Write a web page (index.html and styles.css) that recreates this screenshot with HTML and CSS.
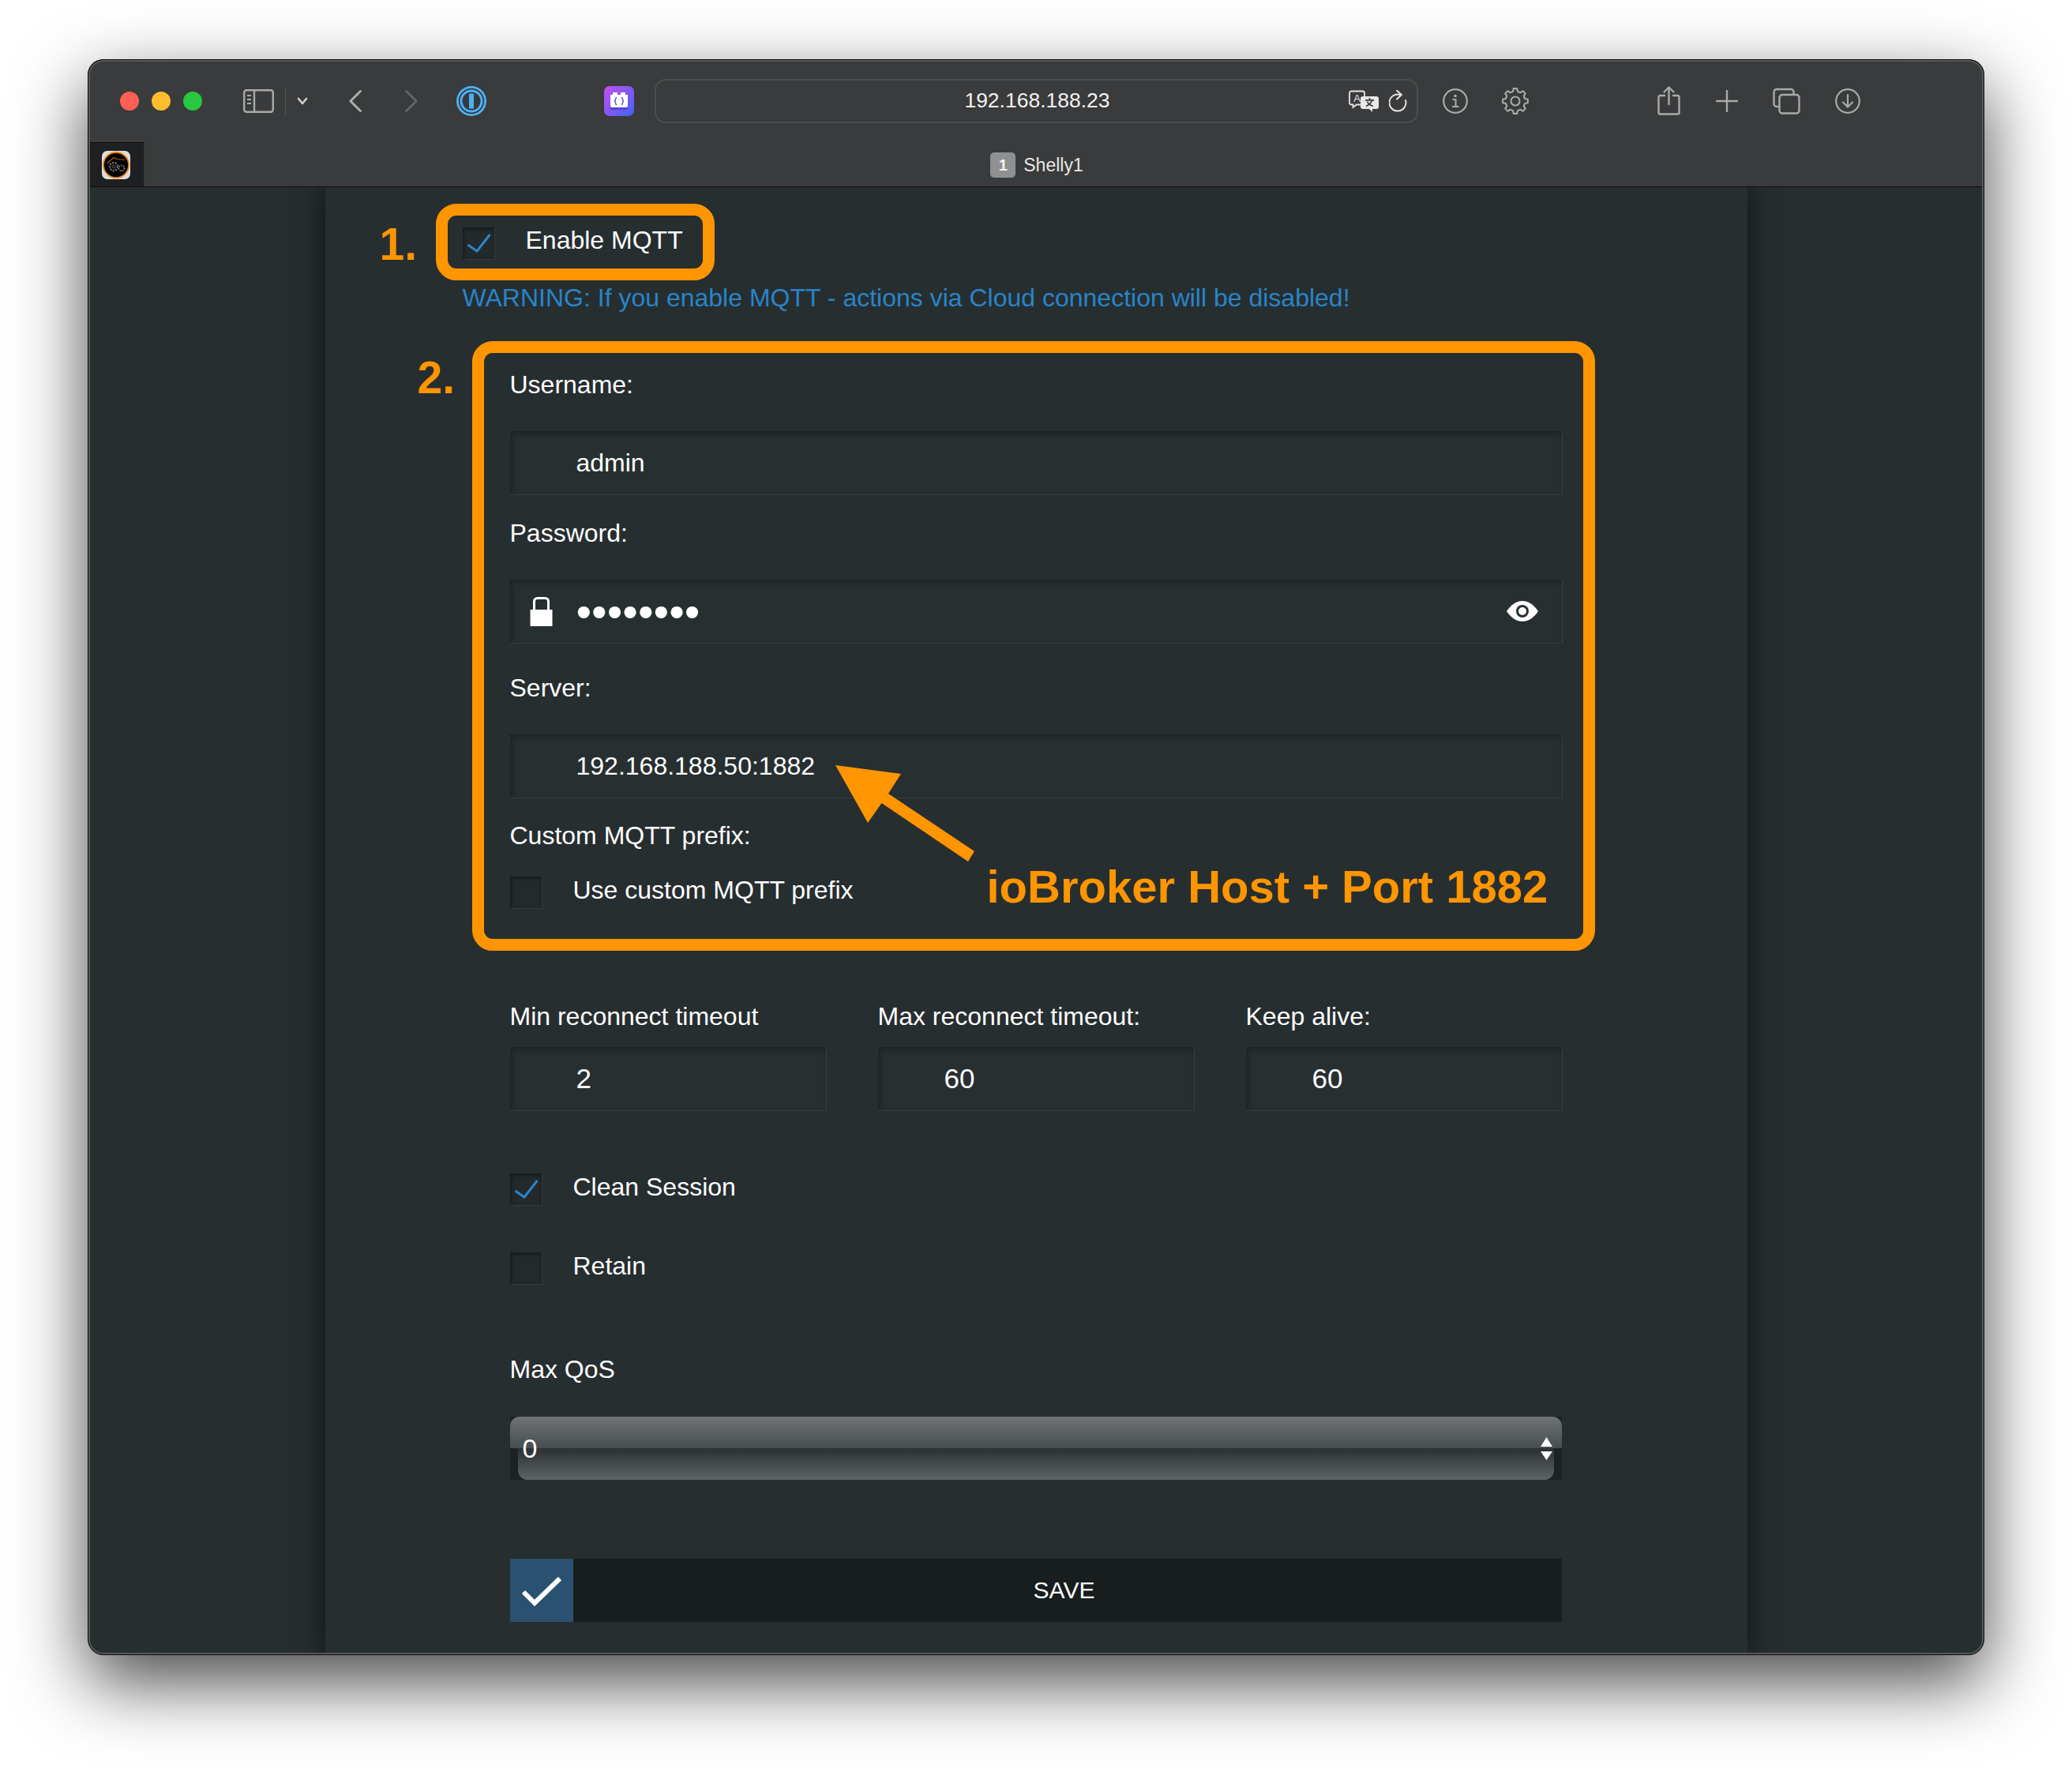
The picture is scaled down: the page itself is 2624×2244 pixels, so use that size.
FILE: index.html
```html
<!DOCTYPE html>
<html lang="en">
<head>
    <meta charset="UTF-8">
    <meta name="viewport" content="width=device-width, initial-scale=1.0">
    <title>Shelly1 MQTT</title>
    <link rel="stylesheet" href="styles.css">
</head>
<body>
<div class="window">
    <div class="toolbar">
        <span class="light light-red"></span>
        <span class="light light-yellow"></span>
        <span class="light light-green"></span>

        <svg class="ic ic-sidebar" width="39" height="30" viewBox="0 0 39 30" fill="none" stroke="#a9aaaa" stroke-width="2.4">
            <rect x="1.2" y="1.2" width="36.6" height="27.6" rx="3"/>
            <path d="M14 1v28"/>
            <path d="M5 8h5M5 13h5M5 18h5" stroke-width="2"/>
        </svg>
        <span class="ic ic-sep"></span>
        <svg class="ic ic-drop" width="14" height="10" viewBox="0 0 14 10" fill="none" stroke="#d0d0d0" stroke-width="2.6" stroke-linecap="round" stroke-linejoin="round">
            <path d="M2 2l5 6 5-6"/>
        </svg>
        <svg class="ic ic-back" width="16" height="28" viewBox="0 0 16 28" fill="none" stroke="#b0b1b1" stroke-width="2.8" stroke-linecap="round" stroke-linejoin="round">
            <path d="M14.5 1.5L1.8 14l12.7 12.5"/>
        </svg>
        <svg class="ic ic-forward" width="16" height="28" viewBox="0 0 16 28" fill="none" stroke="#636465" stroke-width="2.8" stroke-linecap="round" stroke-linejoin="round">
            <path d="M1.5 1.5L14.2 14 1.5 26.5"/>
        </svg>
        <svg class="ic ic-onepass" width="38" height="38" viewBox="-19 -19 38 38">
            <circle r="19" fill="#4cb0f6"/>
            <circle r="15.3" fill="none" stroke="#36393c" stroke-width="1.7"/>
            <circle r="11.5" fill="#36393c"/>
            <rect x="-3" y="-9.5" width="6" height="19" rx="1" fill="#4cb0f6"/>
        </svg>
        <svg class="ic ic-ext" width="38" height="38" viewBox="0 0 38 38">
            <defs>
                <linearGradient id="extGrad" x1="0" y1="0" x2="1" y2="1">
                    <stop offset="0" stop-color="#c64ff0"/>
                    <stop offset="1" stop-color="#3f63f4"/>
                </linearGradient>
            </defs>
            <rect width="38" height="38" rx="7" fill="url(#extGrad)"/>
            <rect x="8" y="12" width="22" height="18" rx="2" fill="#3a2fc0" opacity="0.55"/>
            <path d="M8 11h3V8h6v3h4V8h6v3h3v14a2 2 0 0 1-2 2H10a2 2 0 0 1-2-2z" fill="#fff"/>
            <path d="M16 14.500c-2 0-1 3.500-2.500 4.500 1.500 1 .5 4.500 2.500 4.500M22 14.500c2 0 1 3.500 2.500 4.500-1.500 1-.5 4.500-2.500 4.500" fill="none" stroke="#4a45d8" stroke-width="1.4"/>
        </svg>

        <div class="ic address">
            <span></span>
            <span class="address-text">192.168.188.23</span>
            <span class="address-tools">
                <svg width="38" height="28" viewBox="0 0 38 28">
                    <path d="M3.500 1.500h14a2.500 2.500 0 0 1 2.500 2.500v12a2.500 2.500 0 0 1-2.500 2.500H10l-4.500 3.500v-3.500h-2A2.500 2.500 0 0 1 1 16V4a2.500 2.500 0 0 1 2.500-2.500z" fill="#3a3b3c" stroke="#e6e6e6" stroke-width="1.8"/>
                    <text x="10.500" y="14.500" text-anchor="middle" class="translate-a">A</text>
                    <path d="M18 8h17a3 3 0 0 1 3 3v10a3 3 0 0 1-3 3h-5v4l-4-4h-8a3 3 0 0 1-3-3V11a3 3 0 0 1 3-3z" fill="#e8e8e8"/>
                    <path d="M26.500 10v2.500M21 12.800h11M29.500 13c-1 3.500-4 6-7.500 7.500M23.500 14.500c1 2.500 4 5 7.500 6" fill="none" stroke="#3a3b3c" stroke-width="1.7"/>
                </svg>
                <svg width="23" height="28" viewBox="0 0 23 28" fill="none" stroke="#e6e6e6" stroke-width="1.9" stroke-linecap="round" stroke-linejoin="round">
                    <path d="M14 6A10.500 10.500 0 1 0 21 13"/>
                    <path d="M10 .8L16 6l-6 5.500"/>
                </svg>
            </span>
        </div>

        <svg class="ic ic-info" width="32" height="32" viewBox="0 0 32 32" fill="none" stroke="#a9aaaa" stroke-width="2.2">
            <circle cx="16" cy="16" r="14.800"/>
            <path d="M12.500 14h4v9M12 23h8.500" stroke-width="2"/>
            <circle cx="16" cy="9.500" r="1.800" fill="#a9aaaa" stroke="none"/>
        </svg>
        <svg class="ic ic-gear" width="36" height="36" viewBox="-18 -18 36 36" fill="none" stroke="#a9aaaa" stroke-width="2.1" stroke-linejoin="round">
            <polygon points="12.13,-3.02 15.84,-2.23 15.84,2.23 12.13,3.02 10.71,6.44 12.78,9.63 9.63,12.78 6.44,10.71 3.02,12.13 2.23,15.84 -2.23,15.84 -3.02,12.13 -6.44,10.71 -9.63,12.78 -12.78,9.63 -10.71,6.44 -12.13,3.02 -15.84,2.23 -15.84,-2.23 -12.13,-3.02 -10.71,-6.44 -12.78,-9.63 -9.63,-12.78 -6.44,-10.71 -3.02,-12.13 -2.23,-15.84 2.23,-15.84 3.02,-12.13 6.44,-10.71 9.63,-12.78 12.78,-9.63 10.71,-6.44"/>
            <circle r="5.500"/>
        </svg>
        <svg class="ic ic-share" width="29" height="37" viewBox="0 0 29 37" fill="none" stroke="#a9aaaa" stroke-width="2.4" stroke-linecap="round" stroke-linejoin="round">
            <path d="M9 12H3.500a2 2 0 0 0-2 2v19.500a2 2 0 0 0 2 2h22a2 2 0 0 0 2-2V14a2 2 0 0 0-2-2H20"/>
            <path d="M14.500 23V2M8.500 7.500l6-6 6 6"/>
        </svg>
        <svg class="ic ic-plus" width="28" height="28" viewBox="0 0 28 28" stroke="#a9aaaa" stroke-width="2.4" stroke-linecap="round">
            <path d="M14 1v26M1 14h26"/>
        </svg>
        <svg class="ic ic-tabs" width="35" height="34" viewBox="0 0 35 34" fill="none" stroke="#a9aaaa" stroke-width="2.4">
            <path d="M8 24H5a3.500 3.500 0 0 1-3.500-3.500v-15A3.500 3.500 0 0 1 5 2h18a3.500 3.500 0 0 1 3.500 3.500V9"/>
            <rect x="8.500" y="9" width="25" height="23.500" rx="3.500"/>
        </svg>
        <svg class="ic ic-download" width="32" height="32" viewBox="0 0 32 32" fill="none" stroke="#a9aaaa" stroke-width="2.2" stroke-linecap="round" stroke-linejoin="round">
            <circle cx="16" cy="16" r="14.800"/>
            <path d="M16 8v15M10 17.500l6 6 6-6"/>
        </svg>
    </div>

    <div class="tabbar">
        <div class="pinned-tab">
            <svg width="36" height="36" viewBox="0 0 36 36">
                <rect width="36" height="36" rx="7" fill="#dedede"/>
                <circle cx="18" cy="18" r="16" fill="#000" stroke="#e8850f" stroke-width="1.800"/>
                <path d="M6.500 16L15 8.500l4 2 10 1" fill="none" stroke="#a8600f" stroke-width="1.200"/>
                <circle cx="15" cy="20" r="5" fill="none" stroke="#777" stroke-width="2.400" stroke-dasharray="2 1.500"/>
                <circle cx="15" cy="20" r="2" fill="none" stroke="#666" stroke-width="1"/>
                <circle cx="25" cy="22" r="3.500" fill="none" stroke="#777" stroke-width="2" stroke-dasharray="1.800 1.200"/>
            </svg>
        </div>
        <div class="tab-title">
            <span class="tab-badge">1</span>
            <span class="tab-name">Shelly1</span>
        </div>
    </div>

    <div class="content">
        <div class="column">
            <form class="mqtt-form">
                <div class="mark-box mark-enable">
                    <span class="mark-num num-one">1.</span>
                    <label class="check-row">
                        <span class="check">
                            <svg width="40" height="40" viewBox="0 0 40 40" fill="none" stroke="#2a86c9" stroke-width="3"><path d="M6.500 22L18 30 34.500 9"/></svg>
                        </span>
                        <span class="enable-text">Enable MQTT</span>
                    </label>
                </div>
                <p class="warning">WARNING: If you enable MQTT - actions via Cloud connection will be disabled!</p>

                <div class="mark-box mark-login">
                    <span class="mark-num num-two">2.</span>
                    <label class="lbl lbl-user">Username:</label>
                    <div class="field field-user"><input class="field-input" type="text" value="admin"></div>
                    <label class="lbl lbl-pass">Password:</label>
                    <div class="field field-pass">
                        <svg class="lock" width="29" height="37" viewBox="0 0 29 37">
                            <path d="M5.500 17V5.500a4 4 0 0 1 4-4h10a4 4 0 0 1 4 4V17" fill="none" stroke="#fff" stroke-width="3"/>
                            <rect x="0.500" y="16" width="28" height="21" fill="#fff"/>
                        </svg>
                        <input class="field-input pass-input" type="text" value="••••••••">
                        <svg class="eye" width="40" height="26" viewBox="0 0 40 26">
                            <path d="M0 13C6 4 13 0 20 0s14 4 20 13c-6 9-13 13-20 13S6 22 0 13z" fill="#fff"/>
                            <circle cx="20" cy="13" r="8" fill="#2a3133"/>
                            <circle cx="20" cy="13" r="5" fill="#fff"/>
                        </svg>
                    </div>
                    <label class="lbl lbl-server">Server:</label>
                    <div class="field field-server"><input class="field-input" type="text" value="192.168.188.50:1882"></div>
                    <label class="lbl lbl-prefix">Custom MQTT prefix:</label>
                    <label class="check-row row-prefix">
                        <span class="check"></span>
                        <span class="check-text">Use custom MQTT prefix</span>
                    </label>
                    <svg class="arrow" width="190" height="140" viewBox="1050 960 190 140">
                        <polygon points="1058,969 1141,980 1125,1005 1234,1078 1226,1091 1116.500,1017 1099,1042" fill="#ff9500"/>
                    </svg>
                    <span class="note">ioBroker Host + Port 1882</span>
                </div>

                <div class="timeouts">
                    <div>
                        <label class="lbl">Min reconnect timeout</label>
                        <div class="field field-time"><input class="field-input" type="text" value="2"></div>
                    </div>
                    <div>
                        <label class="lbl">Max reconnect timeout:</label>
                        <div class="field field-time"><input class="field-input" type="text" value="60"></div>
                    </div>
                    <div>
                        <label class="lbl">Keep alive:</label>
                        <div class="field field-time"><input class="field-input" type="text" value="60"></div>
                    </div>
                </div>

                <label class="check-row row-clean">
                    <span class="check">
                        <svg width="40" height="40" viewBox="0 0 40 40" fill="none" stroke="#2a86c9" stroke-width="3"><path d="M6.500 22L18 30 34.500 9"/></svg>
                    </span>
                    <span class="check-text">Clean Session</span>
                </label>
                <label class="check-row row-retain">
                    <span class="check"></span>
                    <span class="check-text">Retain</span>
                </label>

                <label class="lbl lbl-qos">Max QoS</label>
                <div class="select">
                    <div class="select-top"></div>
                    <div class="select-bottom"></div>
                    <div class="select-value">
                        <span>0</span>
                        <svg width="15" height="29" viewBox="0 0 15 29" fill="#fff">
                            <path d="M7.500 0L15 12H0zM0 18h15L7.500 29z"/>
                        </svg>
                    </div>
                </div>

                <button class="save" type="button">
                    <span class="save-icon">
                        <svg width="80" height="80" viewBox="0 0 80 80" fill="none" stroke="#fff" stroke-width="6"><path d="M17 42l14 14 32-31"/></svg>
                    </span>
                    <span class="save-text">SAVE</span>
                </button>
            </form>
        </div>
    </div>
</div>
</body>
</html>
```

FILE: styles.css
```css
* {
    box-sizing: border-box;
}

html, body {
    height: 100%;
}

body {
    margin: 0;
    padding: 75px 111px 148px;
    background: #fff;
    font-family: "Liberation Sans", Arial, sans-serif;
    font-size: 32px;
    color: #fff;
    overflow: hidden;
}

.window {
    position: relative;
    height: 2021px;
    display: flex;
    flex-direction: column;
    border-radius: 20px;
    overflow: hidden;
    background: #272e30;
}

/* shadow and rim of the mac window */
body::before {
    content: "";
    position: absolute;
    left: 111px;
    top: 75px;
    width: 2402px;
    height: 2021px;
    border-radius: 20px;
    box-shadow: 0 34px 90px rgba(0, 0, 0, 0.72);
}

.window::after {
    content: "";
    position: absolute;
    inset: 0;
    border-radius: 20px;
    border: 1px solid #0c0c0c;
    box-shadow: inset 0 0 0 2px #56595b;
    pointer-events: none;
}

/* toolbar */
.toolbar {
    height: 105px;
    flex: none;
    display: flex;
    align-items: center;
    padding-left: 41px;
    background: #3a3b3c;
}

.ic {
    flex: none;
    display: block;
}

.light {
    width: 24px;
    height: 24px;
    border-radius: 50%;
    margin-right: 16px;
}

.light-red { background: #ff5f57; }
.light-yellow { background: #febc2e; }
.light-green { background: #28c840; margin-right: 0; }

.ic-sidebar { margin-left: 52px; }
.ic-sep { margin-left: 14px; width: 1px; height: 36px; background: #555657; }
.ic-drop { margin-left: 14px; }
.ic-back { margin-left: 52px; }
.ic-forward { margin-left: 55px; }
.ic-onepass { margin-left: 49px; }
.ic-ext { margin-left: 149px; }
.ic-info { margin-left: 31px; }
.ic-gear { margin-left: 42px; }
.ic-share { margin-left: 162px; }
.ic-plus { margin-left: 45px; }
.ic-tabs { margin-left: 44px; }
.ic-download { margin-left: 44px; }

.address {
    margin-left: 26px;
    width: 967px;
    height: 56px;
    display: grid;
    grid-template-columns: 1fr auto 1fr;
    align-items: center;
    padding: 0 12px 0 14px;
    border: 2px solid #4b4c4d;
    border-radius: 14px;
}

.address-text {
    font-size: 26.5px;
    color: #f2f2f2;
}

.address-tools {
    display: flex;
    justify-content: flex-end;
    gap: 13px;
}

.translate-a {
    font-size: 13px;
    fill: #e6e6e6;
}

/* tab strip */
.tabbar {
    height: 57px;
    flex: none;
    display: flex;
    background: #3a3b3c;
    border-bottom: 1px solid #0d0d0d;
}

.pinned-tab {
    width: 72px;
    flex: none;
    display: flex;
    align-items: center;
    justify-content: center;
    background: #1f2021;
    border-top: 1px solid #0d0d0d;
    border-right: 1px solid #333;
}

.tab-title {
    flex: 1;
    display: flex;
    align-items: center;
    justify-content: center;
    gap: 10px;
    padding: 2px 70px 0 0;
}

.tab-badge {
    width: 32px;
    height: 32px;
    display: flex;
    align-items: center;
    justify-content: center;
    border-radius: 5px;
    background: #8f9091;
    color: #f2f2f2;
    font-size: 20px;
    font-weight: bold;
}

.tab-name {
    font-size: 23px;
    color: #e8e8e8;
}

/* page */
.content {
    flex: 1;
    min-height: 0;
    display: flex;
    justify-content: center;
    overflow: hidden;
}

.column {
    width: 1801px;
    height: 100%;
    padding: 21px 235px 0 234px;
    background: #272e30;
    box-shadow: 0 0 34px rgba(0, 0, 0, 0.66);
}

.mqtt-form {
    display: flex;
    flex-direction: column;
}

.mark-box {
    position: relative;
    border: 15px solid #ff9500;
    border-radius: 26px;
}

.mark-enable {
    width: 353px;
    height: 97px;
    margin-left: -94px;
    padding: 15px 0 0 19px;
}

.mark-login {
    height: 772px;
    margin: 35px -42px 0 -48px;
    padding: 20px 27px 39px 33px;
}

.mark-num {
    position: absolute;
    font-size: 57px;
    line-height: 57px;
    font-weight: bold;
    color: #ff9500;
}

.num-one {
    left: -86px;
    top: 8px;
}

.num-two {
    left: -84px;
    top: 3px;
}

.warning {
    margin: 2px 0 0 -60px;
    line-height: 40px;
    color: #2885c9;
    white-space: nowrap;
}

.lbl {
    display: block;
    line-height: 40px;
    white-space: nowrap;
}

.field {
    height: 80px;
    display: flex;
    align-items: center;
    margin-top: 39px;
    background: #282f31;
    box-shadow: inset 2px 3px 6px rgba(0, 0, 0, 0.3), 1px 1px 0 #3a4042;
}

.field-input {
    flex: 1;
    min-width: 0;
    height: 100%;
    padding: 0 0 0 84px;
    border: 0;
    outline: 0;
    background: transparent;
    color: #fff;
    font: inherit;
}

.lbl-pass { margin-top: 29px; }
.lbl-server { margin-top: 37px; }
.lbl-prefix { margin-top: 28px; }

.lock {
    flex: none;
    margin-left: 25px;
}

.pass-input {
    padding-left: 30px;
    font-size: 56px;
}

.eye {
    flex: none;
    margin-right: 30px;
}

.check-row {
    display: flex;
    align-items: center;
}

.check {
    width: 40px;
    height: 40px;
    flex: none;
    background: #24292b;
    box-shadow: inset 1px 2px 5px rgba(0, 0, 0, 0.45), 1px 1px 0 #363c3e;
}

.check svg {
    display: block;
}

.check-text {
    margin-left: 40px;
    position: relative;
    top: -3px;
}

.enable-text {
    margin-left: 40px;
    position: relative;
    top: -4px;
}

.row-prefix { margin-top: 32px; }
.row-clean { margin-top: 80px; }
.row-retain { margin-top: 60px; }

.arrow {
    position: absolute;
    left: 437px;
    top: 513px;
}

.note {
    position: absolute;
    left: 637px;
    top: 642px;
    font-size: 58px;
    line-height: 68px;
    font-weight: bold;
    color: #ff9500;
    white-space: nowrap;
}

.timeouts {
    display: grid;
    grid-template-columns: repeat(3, minmax(0, 1fr));
    gap: 66px;
    margin-top: 63px;
}

.field-time {
    margin-top: 19px;
    font-size: 35px;
}

.lbl-qos { margin-top: 88px; }

/* the old glossy select */
.select {
    position: relative;
    height: 80px;
    margin-top: 40px;
    background: #1c2123;
}

.select-top {
    height: 40px;
    border-radius: 12px 12px 0 0;
    background: linear-gradient(#6f7374, #474d4f);
}

.select-bottom {
    height: 40px;
    margin: 0 10px;
    border-radius: 0 0 12px 12px;
    background: linear-gradient(#2a3033, #5f6466);
}

.select-value {
    position: absolute;
    inset: 0;
    display: flex;
    align-items: center;
    justify-content: space-between;
    padding: 0 12px 0 16px;
    font-size: 34px;
}

.save {
    height: 80px;
    display: flex;
    margin-top: 100px;
    padding: 0;
    border: 0;
    background: #181d1e;
    color: #fff;
    font: inherit;
}

.save-icon {
    width: 80px;
    height: 80px;
    flex: none;
    background: #2a5270;
}

.save-icon svg {
    display: block;
}

.save-text {
    flex: 1;
    line-height: 80px;
    padding-right: 8px;
    font-size: 30px;
    text-align: center;
}
```
